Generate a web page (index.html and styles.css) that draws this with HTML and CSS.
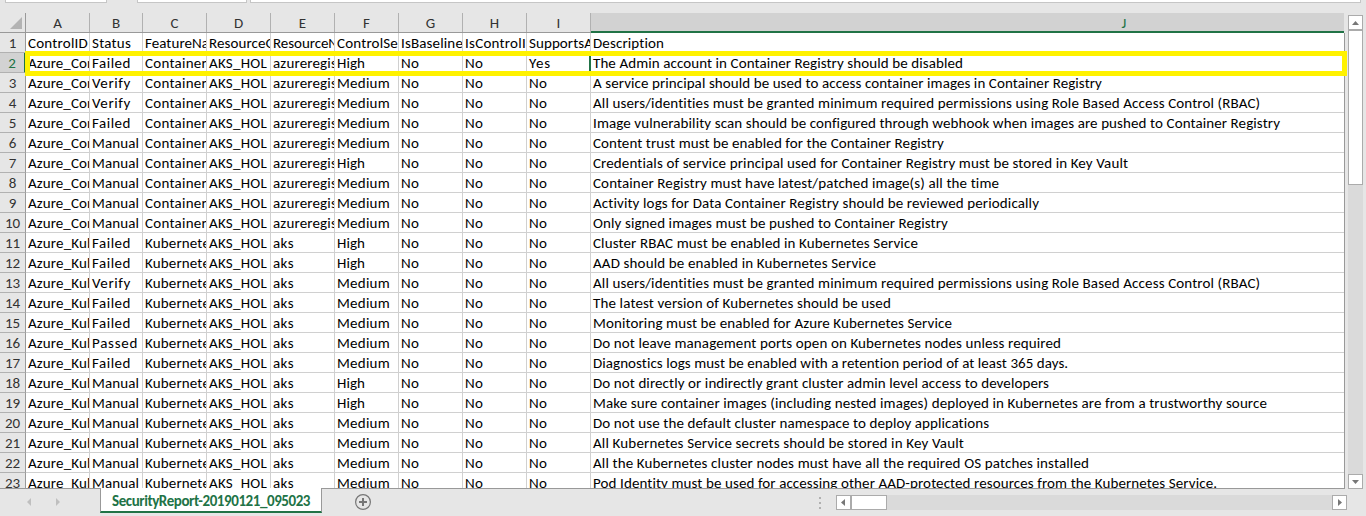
FILE: index.html
```html
<!DOCTYPE html>
<html lang="en">
<head>
<meta charset="utf-8">
<title>SecurityReport-20190121_095023</title>
<link rel="stylesheet" href="styles.css">
</head>
<body>
<div class="app">
  <div class="formula-bar"><div class="name-box"></div><div class="fx-box"></div><div class="formula-box"></div></div>
  <div class="workspace">
    <div class="sheet">
      <div class="columns">
        <div class="corner"><svg width="12" height="12" viewBox="0 0 12 12"><path d="M12 0V12H0Z" fill="#b3b3b3"/></svg></div>
        <div class="col">A</div><div class="col">B</div><div class="col">C</div><div class="col">D</div><div class="col">E</div><div class="col">F</div><div class="col">G</div><div class="col">H</div><div class="col">I</div><div class="col active">J</div>
      </div>
      <div class="rows" id="rows"></div>
      <div class="highlight"></div>
    </div>
    <div class="vscroll">
      <div class="button"><svg width="13" height="13" viewBox="0 0 13 13"><path d="M3 9L6.5 5L10 9Z" fill="#777"/></svg></div>
      <div class="vthumb"></div>
      <div class="button down"><svg width="13" height="13" viewBox="0 0 13 13"><path d="M3 5H10L6.5 9Z" fill="#777"/></svg></div>
    </div>
  </div>
  <div class="footer">
    <div class="nav"><svg width="100" height="27" viewBox="0 0 100 27"><path d="M31 9V17L27 13ZM56 9V17L60 13Z" fill="#bfbfbf"/></svg></div>
    <div class="tab"><span data-width="198">SecurityReport-20190121_095023</span></div>
    <svg class="add" width="18" height="18" viewBox="0 0 18 18" fill="none" stroke="#767676"><circle cx="9" cy="9" r="7.4" stroke-width="1.2"/><path d="M9 5V13M5 9H13" stroke-width="2"/></svg>
    <svg class="grip" width="2" height="12" viewBox="0 0 2 12" fill="#b0b0b0"><path d="M0 0h2v2H0zM0 5h2v2H0zM0 10h2v2H0z"/></svg>
    <div class="hscroll">
      <div class="button"><svg width="13" height="13" viewBox="0 0 13 13"><path d="M8 3V10L4 6.5Z" fill="#777"/></svg></div>
      <div class="hthumb"></div>
      <div class="button right"><svg width="13" height="13" viewBox="0 0 13 13"><path d="M5 3V10L9 6.5Z" fill="#777"/></svg></div>
    </div>
  </div>
</div>
<script src="sheet.js"></script>
</body>
</html>
```

FILE: styles.css
```css
* { box-sizing: border-box; }
body { margin: 0; overflow: hidden; background: #e6e6e6; font: 15px/20px Carlito, Lato, sans-serif; color: #000; }
svg { display: block; }
.app { width: 1366px; height: 516px; display: flex; flex-direction: column; }
.formula-bar { height: 13px; display: flex; padding-left: 5px; }
.formula-bar div { height: 3px; background: #fff; border: 1px solid #c6c6c6; border-top: 0; }
.name-box { width: 102px; margin-right: 30px; }
.fx-box { width: 110px; margin-right: 3px; }
.formula-box { width: 1111px; }
.workspace { height: 476px; display: flex; }
.sheet { position: relative; width: 1345px; height: 476px; border-bottom: 1px solid #999; }
.columns, .row { display: grid; grid-template-columns: 26px 64px 53px repeat(7, 64px) 753px; grid-auto-rows: 20px; }
.columns { height: 20px; border-bottom: 1px solid #999; width: 1344px; grid-auto-rows: 19px; }
.corner { border-right: 1px solid #999; padding: 4px 0 0 10px; }
.col { text-align: center; line-height: 20px; border-right: 1px solid #b1b1b1; color: #333; }
.active { background: #d2d2d2; color: #217346; border-right: 0; border-bottom: 2px solid #217346; height: 20px; padding-left: 313px; }
.rows { height: 455px; overflow: hidden; border-right: 1px solid #999; }
.row { height: 20px; }
.num { text-align: center; background: #e6e6e6; border-right: 1px solid #999; border-bottom: 1px solid #b1b1b1; color: #333; line-height: 21px; }
.num.selected { background: #d2d2d2; color: #217346; border-right: 2px solid #217346; }
.cell { background: #fff; border-right: 1px solid #d0d0d0; border-bottom: 1px solid #d0d0d0; padding-left: 2px; line-height: 21px; overflow: hidden; white-space: nowrap; }
.cell:last-child { border-right: 0; }
.cell.edge { border-right: 2px solid #217346; }
.highlight { position: absolute; left: 25px; top: 38px; width: 1322px; height: 25px; border: 5px solid #fff200; }
.vscroll { width: 15px; height: 474px; margin: 2px 0 0 3px; background: #dadada; display: flex; flex-direction: column; }
.button { width: 15px; height: 15px; border: 1px solid #ababab; background: #fff; flex: none; }
.vthumb { width: 15px; height: 155px; border: 1px solid #ababab; background: #fff; }
.down { margin-top: auto; }
.footer { height: 27px; display: flex; }
.nav { width: 100px; }
.tab { width: 222px; height: 25px; margin-top: -1px; position: relative; background: #fff; border: 1px solid #999; border-top: 0; border-bottom: 2px solid #217346; color: #217346; font-weight: bold; padding-left: 11px; line-height: 26px; white-space: nowrap; }
.add { margin: 4px 0 0 32px; }
.grip { margin: 8px 0 0 447px; }
.hscroll { width: 511px; height: 15px; margin: 6px 0 0 15px; background: #dadada; display: flex; }
.hthumb { width: 36px; border: 1px solid #ababab; background: #fff; }
.right { margin-left: auto; }
```

FILE: sheet.js
```javascript
const descriptions = [
  ["Description", 71],
  ["The Admin account in Container Registry should be disabled", 370],
  ["A service principal should be used to access container images in Container Registry", 509],
  ["All users/identities must be granted minimum required permissions using Role Based Access Control (RBAC)", 667],
  ["Image vulnerability scan should be configured through webhook when images are pushed to Container Registry", 687],
  ["Content trust must be enabled for the Container Registry", 351],
  ["Credentials of service principal used for Container Registry must be stored in Key Vault", 535],
  ["Container Registry must have latest/patched image(s) all the time", 406],
  ["Activity logs for Data Container Registry should be reviewed periodically", 446],
  ["Only signed images must be pushed to Container Registry", 355],
  ["Cluster RBAC must be enabled in Kubernetes Service", 325],
  ["AAD should be enabled in Kubernetes Service", 283],
  ["All users/identities must be granted minimum required permissions using Role Based Access Control (RBAC)", 667],
  ["The latest version of Kubernetes should be used", 298],
  ["Monitoring must be enabled for Azure Kubernetes Service", 359],
  ["Do not leave management ports open on Kubernetes nodes unless required", 468],
  ["Diagnostics logs must be enabled with a retention period of at least 365 days.", 475],
  ["Do not directly or indirectly grant cluster admin level access to developers", 456],
  ["Make sure container images (including nested images) deployed in Kubernetes are from a trustworthy source", 674],
  ["Do not use the default cluster namespace to deploy applications", 396],
  ["All Kubernetes Service secrets should be stored in Key Vault", 371],
  ["All the Kubernetes cluster nodes must have all the required OS patches installed", 496],
  ["Pod Identity must be used for accessing other AAD-protected resources from the Kubernetes Service.", 624]
];
const statuses = "Status Failed Verify Verify Failed Manual Manual Manual Manual Manual Failed Failed Verify Failed Failed Passed Failed Manual Manual Manual Manual Manual Manual".split(" ");
const highRows = [2, 7, 11, 12, 18, 19];
const widths = {
  ControlID: 60, Status: 39, FeatureNa: 64, ResourceG: 66, ResourceN: 65, ControlSe: 61,
  IsBaseline: 62, IsControlI: 61, SupportsA: 64, Azure_Con: 67, Azure_Kub: 67,
  Failed: 39, Verify: 39, Manual: 47, Passed: 46, Container: 62, Kubernete: 65,
  AKS_HOL: 58, azureregis: 64, aks: 21, High: 28, Medium: 53, No: 18, Yes: 22
};

function addCell(row, text, width, className) {
  const cell = document.createElement("div");
  cell.className = className;
  const span = document.createElement("span");
  span.textContent = text;
  if (width) span.dataset.width = width;
  cell.append(span);
  row.append(cell);
}

descriptions.forEach(([description, width], index) => {
  const number = index + 1;
  const registry = number < 11;
  const values = number === 1
    ? ["ControlID", "Status", "FeatureNa", "ResourceG", "ResourceN", "ControlSe", "IsBaseline", "IsControlI", "SupportsA"]
    : [registry ? "Azure_Con" : "Azure_Kub", statuses[index], registry ? "Container" : "Kubernete", "AKS_HOL",
       registry ? "azureregis" : "aks", highRows.includes(number) ? "High" : "Medium", "No", "No", number === 2 ? "Yes" : "No"];
  const row = document.createElement("div");
  row.className = "row";
  addCell(row, number, 0, number === 2 ? "num selected" : "num");
  values.forEach((value, column) => addCell(row, value, widths[value], number === 2 && column === 8 ? "cell edge" : "cell"));
  addCell(row, description, width, "cell");
  document.getElementById("rows").append(row);
});

// Distribute each label over its measured column text width.
document.querySelectorAll("[data-width]").forEach(span => {
  const spacing = (span.dataset.width - span.getBoundingClientRect().width) / span.textContent.length;
  span.style.letterSpacing = spacing + "px";
});
```
